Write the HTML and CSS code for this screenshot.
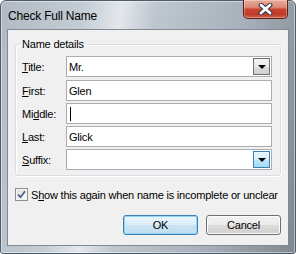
FILE: index.html
```html
<!DOCTYPE html>
<html lang="en">
<head>
    <meta charset="UTF-8">
    <meta name="viewport" content="width=device-width, initial-scale=1.0">
    <title>Check Full Name</title>
    <link rel="stylesheet" href="styles.css">
</head>
<body>
    <div class="window">
        <div class="titlebar">
            <span class="title">Check Full Name</span>
            <div class="close">
                <svg width="15" height="12" viewBox="0 0 15 12">
                    <path d="M3 2 L12 10 M12 2 L3 10" stroke="#2f3746" stroke-width="4.8" stroke-linecap="round"/>
                    <path d="M3 2 L12 10 M12 2 L3 10" stroke="#ffffff" stroke-width="2.8" stroke-linecap="round"/>
                </svg>
            </div>
        </div>

        <div class="client">
            <fieldset class="group">
                <legend>Name details</legend>
                <div class="rows">
                    <div class="row">
                        <span class="label"><u>T</u>itle:</span>
                        <div class="field combo">
                            <span class="value">Mr.</span>
                            <span class="drop"><span class="arrow"></span></span>
                        </div>
                    </div>
                    <div class="row">
                        <span class="label"><u>F</u>irst:</span>
                        <div class="field"><span class="value">Glen</span></div>
                    </div>
                    <div class="row">
                        <span class="label">Mi<u>d</u>dle:</span>
                        <div class="field"><span class="caret"></span></div>
                    </div>
                    <div class="row">
                        <span class="label"><u>L</u>ast:</span>
                        <div class="field"><span class="value">Glick</span></div>
                    </div>
                    <div class="row">
                        <span class="label"><u>S</u>uffix:</span>
                        <div class="field combo">
                            <span class="value"></span>
                            <span class="drop hot"><span class="arrow"></span></span>
                        </div>
                    </div>
                </div>
            </fieldset>

            <div class="check">
                <span class="box">
                    <svg width="9" height="9" viewBox="0 0 9 9">
                        <path d="M1 4.5 L3.5 7.2 L8 1.2" fill="none" stroke="#4a5f86" stroke-width="1.8"/>
                    </svg>
                </span>
                <span>S<u>h</u>ow this again when name is incomplete or unclear</span>
            </div>

            <div class="buttons">
                <div class="btn default">OK</div>
                <div class="btn">Cancel</div>
            </div>
        </div>
    </div>
</body>
</html>
```

FILE: styles.css
```css
body {
    margin: 0;
    background-color: #ffffff;
    font-family: 'Liberation Sans', Arial, sans-serif;
    font-size: 11px;
    letter-spacing: -0.2px;
    color: #000;
}
.window {
    width: 296px;
    height: 254px;
    box-sizing: border-box;
    border: 1px solid #4f5c6a;
    border-radius: 6px 6px 3px 3px;
    background: linear-gradient(100deg, #b1bac4 0%, #c4ccd4 25%, #e4e8ec 36%, #bec6cf 46%, #a9b2bc 72%, #7f8890 100%);
    box-shadow: inset 0 0 0 1px rgba(255,255,255,0.45);
    display: flex;
    flex-direction: column;
}
.titlebar {
    height: 28px;
    display: flex;
    justify-content: space-between;
    align-items: flex-start;
    padding-left: 7px;
}
.title {
    font-size: 12px;
    margin-top: 8px;
    line-height: 14px;
    color: #000;
}
.close {
    width: 45px;
    height: 19px;
    box-sizing: border-box;
    margin-top: -1px;
    margin-right: 7px;
    border: 1px solid #5a2018;
    border-top: none;
    border-radius: 0 0 5px 5px;
    background: linear-gradient(#e9ab9b 0%, #dd8a76 40%, #c9442f 52%, #c13a28 80%, #d3634a 100%);
    box-shadow: inset 0 0 0 1px rgba(255,255,255,0.3);
    display: flex;
    align-items: center;
    justify-content: center;
}
.client {
    flex: 1;
    margin: 0 6px 7px 6px;
    border: 1px solid #7f8a96;
    background-color: #f0f0f0;
    display: flex;
    flex-direction: column;
}
.group {
    margin: 8px 7px 0 7px;
    padding: 0 8px 5px 6px;
    border: 1px solid #d5dfe5;
    border-radius: 3px;
    box-shadow: inset 1px 1px 0 #fff, 1px 1px 0 #fff;
}
.group legend {
    padding: 0 2px;
    margin-left: -2px;
    line-height: 13px;
}
.rows {
    margin-top: 5px;
    display: flex;
    flex-direction: column;
    gap: 2px;
}
.row {
    display: flex;
    align-items: center;
    height: 21px;
}
.row:first-child {
    margin-bottom: 1px;
}
.label {
    width: 44px;
}
.field {
    flex: 1;
    height: 21px;
    box-sizing: border-box;
    border: 1px solid #abadb3;
    background-color: #fff;
    display: flex;
    align-items: center;
    padding-left: 2px;
}
.combo {
    justify-content: space-between;
    padding-right: 1px;
}
.caret {
    width: 1px;
    height: 14px;
    background-color: #000;
    margin-left: 1px;
}
.drop {
    width: 17px;
    height: 17px;
    box-sizing: border-box;
    border: 1px solid #707070;
    background: linear-gradient(#f2f2f2 0%, #ebebeb 50%, #dddddd 50%, #cfcfcf 100%);
    display: flex;
    align-items: center;
    justify-content: center;
}
.drop.hot {
    border-color: #3c7fb1;
    background: linear-gradient(#eaf6fd 0%, #d9f0fc 50%, #bee6fd 50%, #a7d9f5 100%);
}
.arrow {
    width: 0;
    height: 0;
    border-left: 4px solid transparent;
    border-right: 4px solid transparent;
    border-top: 4px solid #000;
    margin-top: 1px;
}
.check {
    display: flex;
    align-items: center;
    gap: 3px;
    margin: 12px 0 0 7px;
    height: 13px;
}
.box {
    width: 13px;
    height: 13px;
    box-sizing: border-box;
    border: 1px solid #8e8f8f;
    background: linear-gradient(135deg, #dcdcdc, #ffffff);
    box-shadow: inset 0 0 0 1px #f4f4f4;
    display: flex;
    align-items: center;
    justify-content: center;
}
.buttons {
    display: flex;
    justify-content: flex-end;
    gap: 8px;
    margin: 14px 7px 0 0;
}
.btn {
    width: 75px;
    height: 20px;
    box-sizing: border-box;
    border: 1px solid #707070;
    border-radius: 3px;
    background: linear-gradient(#f2f2f2 0%, #ebebeb 50%, #dddddd 50%, #cfcfcf 100%);
    box-shadow: inset 0 0 0 1px #fcfcfc;
    display: flex;
    align-items: center;
    justify-content: center;
}
.btn.default {
    border-color: #3c7fb1;
    background: linear-gradient(#eaf5fc 0%, #dcedf8 50%, #cbe4f4 50%, #c0ddf1 100%);
    box-shadow: inset 0 0 0 1px #94d5f8;
}
```
